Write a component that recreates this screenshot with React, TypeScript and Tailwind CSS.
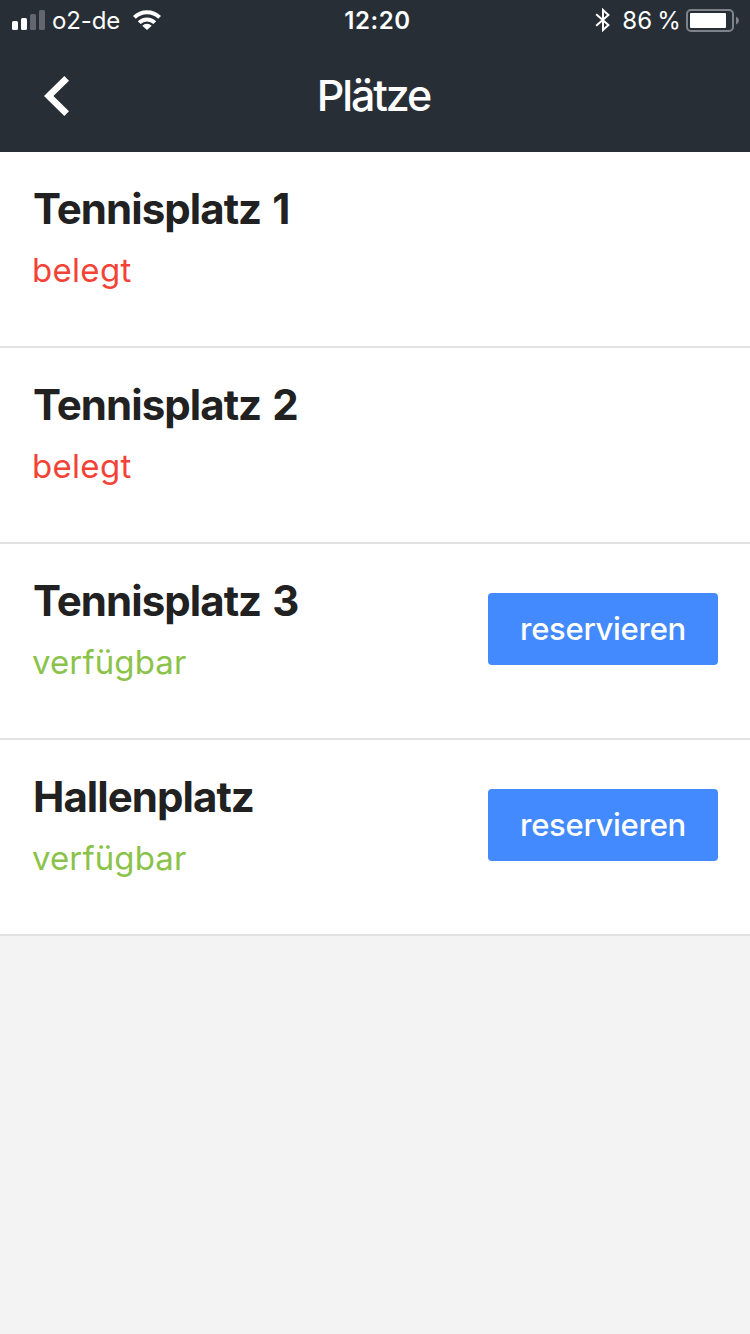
type Court = { name: string; free: boolean };

const courts: Court[] = [
  { name: 'Tennisplatz 1', free: false },
  { name: 'Tennisplatz 2', free: false },
  { name: 'Tennisplatz 3', free: true },
  { name: 'Hallenplatz', free: true },
];

function StatusBar() {
  return (
    <div className="grid h-10 grid-cols-3 items-start text-[24px] leading-10">
      <div className="flex h-10 items-center pl-3">
        <svg className="h-5 w-[33px]" viewBox="0 0 33 20">
          <rect x="0" y="11" width="6" height="9" rx="1.5" fill="#fff" />
          <rect x="9" y="8" width="6" height="12" rx="1.5" fill="#fff" />
          <rect x="18" y="4" width="6" height="16" rx="1.5" fill="#64666f" />
          <rect x="27" y="0" width="6" height="20" rx="1.5" fill="#64666f" />
        </svg>
        <span className="mt-0.5 ml-[7px] tracking-[-0.1px]">o2-de</span>
        <svg className="ml-[13px] h-5 w-7" viewBox="0 0 28 20" fill="none" stroke="#fff" strokeWidth="4">
          <path d="M1.4 7.4A17.8 17.8 0 0 1 26.6 7.4" />
          <path d="M6.2 12.7A11 11 0 0 1 21.8 12.7" />
          <path d="M14 20L9.3 15.8A6.7 6.7 0 0 1 18.7 15.8Z" fill="#fff" stroke="none" />
        </svg>
      </div>
      <div className="mt-px pl-[5px] text-center font-semibold tracking-[0.6px]">12:20</div>
      <div className="flex h-10 items-center justify-end pr-[11px]">
        <svg className="h-6 w-4" viewBox="0 0 16 24" fill="none" stroke="#fff" strokeWidth="2">
          <path d="M1.2 6.2L13.4 17L8 22V2L13.4 7L1.2 17.8" />
        </svg>
        <span className="mt-0.5 ml-[11px] tracking-[0.2px] [word-spacing:-2px]">86 %</span>
        <svg className="ml-[5px] h-[23px] w-[53px]" viewBox="0 0 53 23">
          <rect x="1" y="1" width="46" height="21" rx="4" fill="none" stroke="#7f8389" strokeWidth="2" />
          <rect x="4" y="4" width="36" height="15" rx="1" fill="#fff" />
          <path d="M50 7.5Q53 9 53 11.5T50 15.5Z" fill="#7f8389" />
        </svg>
      </div>
    </div>
  );
}

function NavBar() {
  return (
    <div className="grid h-28 grid-cols-3 items-center">
      <button aria-label="Zurück" className="ml-11 w-[26px]">
        <svg className="h-10 w-[26px]" viewBox="0 0 26 40" fill="#fff">
          <path d="M20.3 0L25 4.7L9.4 20L25 35.3L20.3 40L0 20Z" />
        </svg>
      </button>
      <h1 className="-mt-0.5 pr-[3px] text-center text-[43px] leading-[112px] font-medium tracking-[-2.1px]">Plätze</h1>
    </div>
  );
}

function CourtRow({ name, free }: Court) {
  return (
    <li className="flex h-[196px] items-start justify-between border-b-2 border-[#e2e2e2] bg-white px-8">
      <div className="pt-[31px]">
        <h2 className="pl-px text-[42px] leading-[52px] font-bold tracking-[-0.95px] text-[#212121] [word-spacing:2px]">
          {name}
        </h2>
        <p
          className={
            free
              ? 'mt-3 text-[33px] leading-[46px] tracking-[0.1px] text-[#8bc34a]'
              : 'mt-3 text-[33px] leading-[46px] tracking-[0.3px] text-[#f44336]'
          }
        >
          {free ? 'verfügbar' : 'belegt'}
        </p>
      </div>
      {free && (
        <button className="mt-[49px] h-[72px] w-[230px] rounded bg-[#448aff] text-[31px] leading-[72px] font-medium tracking-[-0.3px] text-white">
          reservieren
        </button>
      )}
    </li>
  );
}

export default function App() {
  return (
    <div className="h-[1334px] w-[750px] overflow-hidden bg-[#f3f3f3] font-['Inter',sans-serif]">
      <header className="h-[152px] bg-[#272e36] text-white">
        <StatusBar />
        <NavBar />
      </header>
      <ul>
        {courts.map((court) => (
          <CourtRow key={court.name} {...court} />
        ))}
      </ul>
    </div>
  );
}
